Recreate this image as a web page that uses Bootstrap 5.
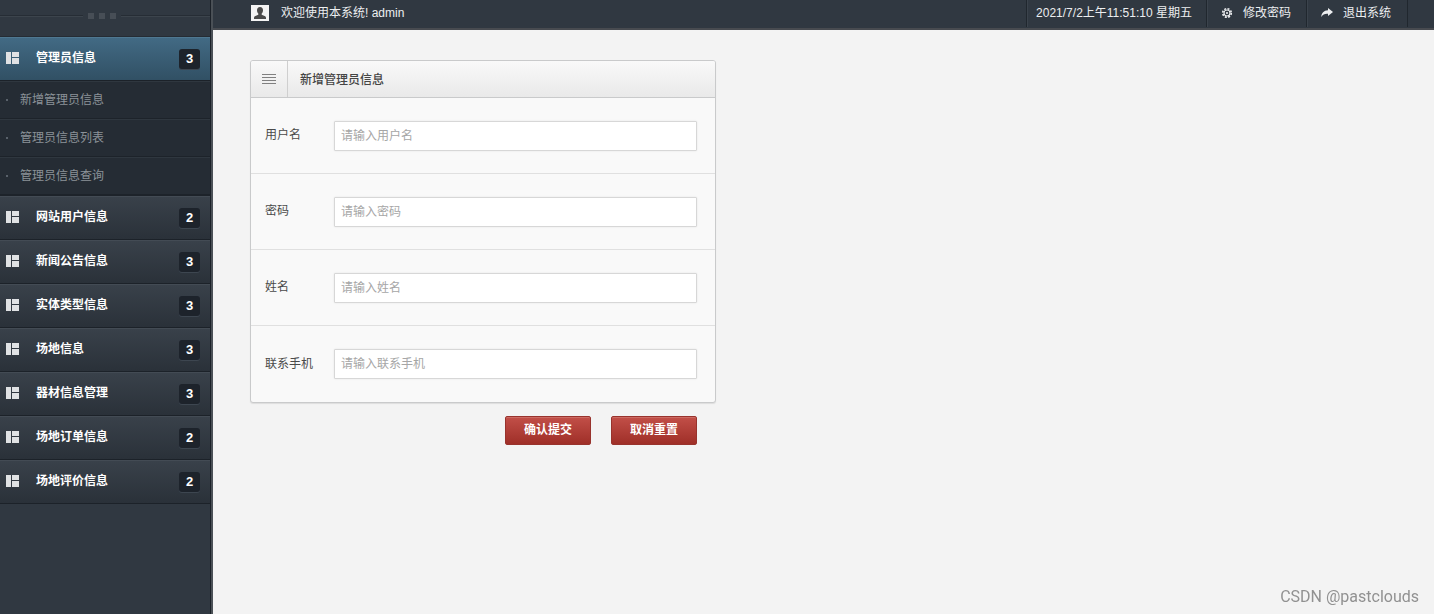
<!DOCTYPE html>
<html lang="zh-CN">
<head>
<meta charset="utf-8">
<meta name="viewport" content="width=device-width, initial-scale=1">
<title>新增管理员信息</title>
<link href="https://cdn.jsdelivr.net/npm/bootstrap@5.3.0/dist/css/bootstrap.min.css" rel="stylesheet">
<style>
body { font-family: "Liberation Sans", "Noto Sans CJK SC", sans-serif; font-size: 12px; line-height: 18px; background: #f3f3f3; color: #4a4a4a; }
a { text-decoration: none; }
.side { width: 213px; background: #303841; border-right: 2px solid #4a5056; box-shadow: inset -1px 0 #1b2128; }
.side-inner { margin-right: 1px; }
.grip { height: 37px; gap: 5px; padding-right: 6px; padding-bottom: 5px; border-bottom: 1px solid #252c34; }
.grip::before, .grip::after { content: ""; flex: 1; height: 2px; background: #262d35; border-bottom: 1px solid #3c444c; }
.grip::after { margin-right: -6px; flex-basis: 6px; }
.grip i { width: 6px; height: 6px; background: #474e56; }
.menu-link { height: 44px; padding: 0 10px 0 6px; color: #fff; font-weight: 700; background: linear-gradient(#39414a, #2a3139); border-top: 1px solid #434b54; border-bottom: 1px solid #1c2229; }
.menu-link.active { background: linear-gradient(#426a84, #315064); border-top-color: #4f7891; }
.menu-link svg { width: 13px; height: 12px; margin: 0 17px 2px 0; fill: #e0e2e4; }
.menu-link span { padding-bottom: 2px; }
.count { width: 21px; height: 20px; line-height: 20px; border-radius: 3px; background: #1d232b; font-size: 13px; text-align: center; box-shadow: 0 1px #3d4650; }
.submenu { padding-bottom: 1px; background: #1d232a; }
.sub-link { height: 38px; padding: 0 6px; color: #8b9298; background: #252c34; border-top: 1px solid #2f373f; border-bottom: 1px solid #1d232a; }
.sub-link::before { content: ""; width: 2px; height: 2px; margin-right: 12px; background: #59616a; }
.topbar { height: 30px; background: #303841; border-bottom: 2px solid #484b50; color: #eceef0; padding: 0 26px 2px 38px; }
.topbar a { color: #eceef0; }
.topbar .cell { height: 28px; padding: 0 15px 0 14px; border-left: 1px solid #20272e; box-shadow: inset 1px 0 #3b434c; }
.topbar .clock { padding: 0 14px 0 9px; }
.topbar .end { padding-right: 16px; border-right: 1px solid #20272e; }
.topbar .cell svg { margin-right: 10px; }
.tools { height: 28px; }
.main { padding: 30px 37px; }
.form-box { width: 100%; max-width: 466px; }
.panel { background: #f9f9f9; border: 1px solid #c9cacb; border-radius: 3px; box-shadow: 0 1px 1px #ddd; overflow: hidden; }
.panel-head { height: 37px; background: linear-gradient(#f9f9f9, #e9e9e9); border-bottom: 1px solid #c9cacb; }
.panel-head h1 { font-size: 12px; line-height: 18px; font-weight: 500; color: #454545; padding: 2px 0 0 12px; }
.panel-icon { width: 37px; height: 36px; border-right: 1px solid #cfcfcf; }
.field { height: 76px; padding: 0 18px 0 14px; border-bottom: 1px solid #e0e0e0; }
.field:last-child { border-bottom: 0; }
.field label { width: 69px; padding-bottom: 1px; }
.field .form-control { height: 30px; padding: 0 6px; font-size: 12px; border: 1px solid #d7d7d7; border-radius: 1px; background: #fff; box-shadow: 0 0 2px #e4e4e4; }
.form-control::placeholder { color: #a6a6a6; }
.actions { gap: 20px; padding: 13px 19px; }
.btn-red { width: 86px; height: 29px; padding: 0 0 1px; font-size: 12px; line-height: 18px; font-weight: 700; color: #fff; border: 1px solid #98332d; border-radius: 2px; background: linear-gradient(#c24f48, #9f2f28); box-shadow: inset 0 1px #cc6a62; }
.btn-red:hover { color: #fff; background: #a8362f; }
.credit { right: 15px; bottom: 6px; font-family: Roboto, sans-serif; font-size: 16px; line-height: 22px; color: #919191; }
</style>
</head>
<body>
<svg class="d-none" xmlns="http://www.w3.org/2000/svg">
  <symbol id="grid" viewBox="0 0 13 12"><path d="M0 0h5v12H0zM6 0h7v5H6zM6 6h7v6H6z"/></symbol>
</svg>
<div class="d-flex min-vh-100">
  <nav class="side flex-shrink-0" aria-label="主菜单">
    <div class="side-inner">
      <div class="grip d-flex align-items-center"><i></i><i></i><i></i></div>
      <a href="#" class="menu-link active d-flex align-items-center"><svg><use href="#grid"/></svg><span>管理员信息</span><b class="count ms-auto">3</b></a>
      <div class="submenu">
        <a href="#" class="sub-link d-flex align-items-center">新增管理员信息</a>
        <a href="#" class="sub-link d-flex align-items-center">管理员信息列表</a>
        <a href="#" class="sub-link d-flex align-items-center">管理员信息查询</a>
      </div>
      <a href="#" class="menu-link d-flex align-items-center"><svg><use href="#grid"/></svg><span>网站用户信息</span><b class="count ms-auto">2</b></a>
      <a href="#" class="menu-link d-flex align-items-center"><svg><use href="#grid"/></svg><span>新闻公告信息</span><b class="count ms-auto">3</b></a>
      <a href="#" class="menu-link d-flex align-items-center"><svg><use href="#grid"/></svg><span>实体类型信息</span><b class="count ms-auto">3</b></a>
      <a href="#" class="menu-link d-flex align-items-center"><svg><use href="#grid"/></svg><span>场地信息</span><b class="count ms-auto">3</b></a>
      <a href="#" class="menu-link d-flex align-items-center"><svg><use href="#grid"/></svg><span>器材信息管理</span><b class="count ms-auto">3</b></a>
      <a href="#" class="menu-link d-flex align-items-center"><svg><use href="#grid"/></svg><span>场地订单信息</span><b class="count ms-auto">2</b></a>
      <a href="#" class="menu-link d-flex align-items-center"><svg><use href="#grid"/></svg><span>场地评价信息</span><b class="count ms-auto">2</b></a>
    </div>
  </nav>
  <div class="flex-grow-1">
    <header class="topbar d-flex align-items-center">
      <svg width="18" height="16" viewBox="0 0 18 16"><path fill="#f4f4f4" d="M0 0h18v16H0z"/><path fill="#4a4a4a" d="M9 2c2 0 3 1.300 3 3.200 0 1.500-.6 2.600-1.300 3.300v1.300l3.500 1.500c.6.300.8.900.8 1.700v1H3v-1c0-.8.200-1.400.8-1.700l3.500-1.500V8.500C6.600 7.800 6 6.700 6 5.200 6 3.300 7 2 9 2z"/></svg>
      <span class="ms-2 ps-1">欢迎使用本系统! admin</span>
      <div class="tools ms-auto d-flex">
        <span class="cell clock d-flex align-items-center">2021/7/2上午11:51:10 星期五</span>
        <a href="#" class="cell d-flex align-items-center"><svg width="12" height="12" viewBox="0 0 12 12" fill="none" stroke="#eceef0"><circle cx="6" cy="6" r="4.300" stroke-width="1.600" stroke-dasharray="2 1.377"/><circle cx="6" cy="6" r="3" stroke-width="1.200"/><circle cx="6" cy="6" r="1.100" fill="#eceef0" stroke="none"/></svg>修改密码</a>
        <a href="#" class="cell end d-flex align-items-center"><svg width="12" height="12" viewBox="0 0 12 12" fill="#eceef0"><path d="M7 1l5 4-5 4V6.800C4 6.500 1.800 7.500.3 10 .4 6 2.800 3.600 7 3.300z"/></svg>退出系统</a>
      </div>
    </header>
    <main class="main">
      <form class="form-box">
        <div class="panel">
          <div class="panel-head d-flex align-items-center">
            <div class="panel-icon d-flex align-items-center justify-content-center"><svg width="14" height="10" viewBox="0 0 14 10"><path fill="#808080" d="M0 0h14v1H0zM0 3h14v1H0zM0 6h14v1H0zM0 9h14v1H0z"/></svg></div>
            <h1 class="mb-0">新增管理员信息</h1>
          </div>
          <div class="field d-flex align-items-center"><label class="flex-shrink-0" for="user">用户名</label><input class="form-control" id="user" type="text" placeholder="请输入用户名"></div>
          <div class="field d-flex align-items-center"><label class="flex-shrink-0" for="pass">密码</label><input class="form-control" id="pass" type="password" placeholder="请输入密码"></div>
          <div class="field d-flex align-items-center"><label class="flex-shrink-0" for="realname">姓名</label><input class="form-control" id="realname" type="text" placeholder="请输入姓名"></div>
          <div class="field d-flex align-items-center"><label class="flex-shrink-0" for="phone">联系手机</label><input class="form-control" id="phone" type="tel" placeholder="请输入联系手机"></div>
        </div>
        <div class="actions d-flex justify-content-end">
          <button type="submit" class="btn btn-red">确认提交</button>
          <button type="reset" class="btn btn-red">取消重置</button>
        </div>
      </form>
    </main>
  </div>
</div>
<div class="credit position-fixed">CSDN @pastclouds</div>
<script src="https://cdn.jsdelivr.net/npm/bootstrap@5.3.0/dist/js/bootstrap.bundle.min.js"></script>
</body>
</html>
